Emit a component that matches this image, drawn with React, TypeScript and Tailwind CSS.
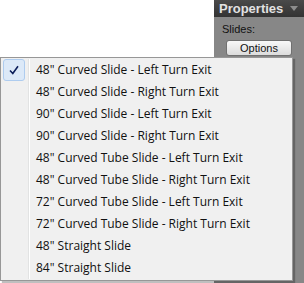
const items = [
  '48" Curved Slide - Left Turn Exit',
  '48" Curved Slide - Right Turn Exit',
  '90" Curved Slide - Left Turn Exit',
  '90" Curved Slide - Right Turn Exit',
  '48" Curved Tube Slide - Left Turn Exit',
  '48" Curved Tube Slide - Right Turn Exit',
  '72" Curved Tube Slide - Left Turn Exit',
  '72" Curved Tube Slide - Right Turn Exit',
  '48" Straight Slide',
  '84" Straight Slide',
]

const App = () => {
  return (
    <div className="relative w-[304px] h-[283px] overflow-hidden bg-white font-['Open_Sans',sans-serif]">
      <div className="flex h-full">
        <div className="flex-1 bg-white" />
        <div className="w-[90px] h-full flex flex-col bg-[#878787]">
          <div className="h-[17px] flex items-center justify-between pl-[5px] pr-[6px] bg-gradient-to-b from-[#4a4a4a] to-[#333333]">
            <span className="text-[13px] font-bold text-[#e2e2e2] font-['Liberation_Sans',sans-serif] leading-none">
              Properties
            </span>
            <svg width="8" height="5" viewBox="0 0 8 5">
              <path d="M0 0 L8 0 L4 5 Z" fill="#8d8d8d" />
            </svg>
          </div>
          <div className="flex pl-[8px] pt-[6px] text-[11px] text-[#111] font-['Liberation_Sans',sans-serif] leading-[13px]">
            Slides:
          </div>
          <div className="flex pl-[12px] pt-[4px]">
            <button className="w-[66px] h-[16px] rounded-[3px] border border-[#707070] bg-gradient-to-b from-[#f8f8f8] to-[#dcdcdc] text-[11px] leading-none text-[#111] font-['Liberation_Sans',sans-serif]">
              Options
            </button>
          </div>
        </div>
      </div>

      <div className="absolute left-0 top-[57px] w-[293px] border border-[#979797] bg-[#f0f0f0] py-px pl-[2px] shadow-[2px_2px_1px_rgba(0,0,0,0.25)]">
        <div className="absolute top-px bottom-px left-[27px] w-px bg-[#e2e3e3]" />
        <div className="absolute top-px bottom-px left-[28px] w-px bg-white" />
        {items.map((label, i) => (
          <div key={label} className="relative flex items-center h-[22px]">
            <div className="w-[22px] h-[22px] flex items-center justify-center">
              {i === 0 && (
                <div className="w-[22px] h-[22px] rounded-[3px] border border-[#aeccef] bg-[#dce9f8] flex items-center justify-center">
                  <svg width="10" height="10" viewBox="0 0 10 10">
                    <path d="M1 5.5 L3.8 8.5 L9 1.2" fill="none" stroke="#0c1e5a" strokeWidth="1.6" />
                  </svg>
                </div>
              )}
            </div>
            <span className="pl-[11px] text-[12px] text-[#111] whitespace-nowrap leading-none">{label}</span>
          </div>
        ))}
      </div>
    </div>
  )
}

export default App
